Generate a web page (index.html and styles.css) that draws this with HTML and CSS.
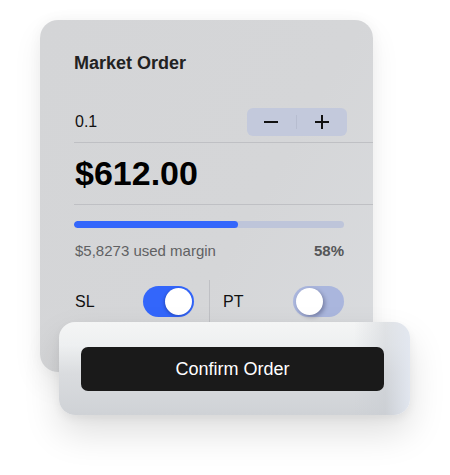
FILE: index.html
```html
<!DOCTYPE html>
<html>
<head>
<meta charset="utf-8">
<link rel="stylesheet" href="styles.css">
</head>
<body>
<div class="stage">
  <div class="card">
    <div class="title">Market Order</div>
    <div class="row qty">
      <span class="qty-val">0.1</span>
      <div class="stepper">
        <span class="step">
          <svg width="14" height="14" viewBox="0 0 14 14"><path d="M0 7H14" stroke="#111" stroke-width="2"/></svg>
        </span>
        <span class="step-sep"></span>
        <span class="step">
          <svg width="14" height="14" viewBox="0 0 14 14"><path d="M0 7H14M7 0V14" stroke="#111" stroke-width="2"/></svg>
        </span>
      </div>
    </div>
    <div class="row price">$612.00</div>
    <div class="margin">
      <div class="bar"><div class="fill" style="width:164px"></div></div>
      <div class="margin-text">
        <span>$5,8273 used margin</span>
        <span class="pct">58%</span>
      </div>
    </div>
    <div class="toggles">
      <div class="tcol left">
        <span class="tlabel">SL</span>
        <span class="switch on"><span class="knob"></span></span>
      </div>
      <div class="tcol right">
        <span class="tlabel">PT</span>
        <span class="switch off"><span class="knob"></span></span>
      </div>
    </div>
  </div>
  <div class="confirm">
    <button class="btn">Confirm Order</button>
  </div>
</div>
</body>
</html>
```

FILE: styles.css
```css
* { box-sizing: border-box; }
html, body { margin: 0; padding: 0; background: #ffffff; }
body { font-family: "Liberation Sans", Arial, sans-serif; width: 450px; height: 475px; overflow: hidden; }

.stage { padding: 20px 0 0 40px; }

.card {
  width: 333px;
  height: 352px;
  border-radius: 18px;
  background: linear-gradient(120deg, #d4d5d7 0%, #d5d6d8 60%, #d9dbde 100%);
  box-shadow: 0 12px 30px rgba(0,0,0,0.07), 0 0 14px rgba(0,0,0,0.04);
  padding: 32px 0 0 34px;
  overflow: hidden;
}

.title {
  font-size: 18px;
  line-height: 22px;
  font-weight: bold;
  color: #222;
  margin: 0 0 34px 0;
}

.row {
  border-bottom: 1px solid #bfc0c4;
  padding-right: 26px;
}

.qty {
  display: flex;
  align-items: center;
  justify-content: space-between;
  height: 35px;
  padding-bottom: 6px;
}
.qty-val { font-size: 16px; color: #111; padding-left: 1px; }

.stepper {
  width: 100px;
  height: 28px;
  border-radius: 6px;
  background: #c3c9dc;
  display: flex;
  align-items: center;
  justify-content: space-between;
  padding: 0 18px 0 17px;
}
.step { display: flex; align-items: center; }
.step svg { display: block; }
.step-sep { width: 1px; height: 14px; background: #b7bdd0; }

.price {
  font-size: 34px;
  line-height: 40px;
  font-weight: bold;
  color: #000;
  padding-top: 10px;
  padding-bottom: 11px;
  padding-left: 1px;
}

.margin { padding: 16px 29px 0 0; }
.bar {
  height: 7px;
  border-radius: 4px;
  background: #bec5da;
  overflow: hidden;
}
.fill { height: 100%; background: #3366fb; border-radius: 4px; }
.margin-text {
  display: flex;
  justify-content: space-between;
  font-size: 15px;
  line-height: 18px;
  color: #606163;
  margin-top: 14px;
  padding-left: 1px;
}
.pct { font-weight: bold; color: #555658; }

.toggles {
  display: flex;
  margin-top: 20px;
  height: 60px;
}
.tcol {
  display: flex;
  align-items: flex-start;
  justify-content: space-between;
  padding-top: 6px;
}
.tcol.left {
  width: 136px;
  padding-right: 15px;
  border-right: 1px solid #bfc0c4;
}
.tcol.right {
  width: 163px;
  padding-left: 12px;
  padding-right: 29px;
}
.tlabel {
  font-size: 16px;
  line-height: 31px;
  color: #111;
  padding-left: 1px;
}
.switch {
  position: relative;
  width: 51px;
  height: 31px;
  border-radius: 16px;
  display: block;
}
.switch.on { background: #3366fb; }
.switch.off { background: #aab6dd; }
.knob {
  position: absolute;
  top: 2px;
  width: 27px;
  height: 27px;
  border-radius: 50%;
  background: #fff;
}
.switch.on .knob { right: 2px; box-shadow: -1px 1px 3px rgba(0,0,40,0.25); }
.switch.off .knob { left: 3px; box-shadow: 2px 2px 4px rgba(0,0,40,0.3); }

.confirm {
  position: relative;
  z-index: 2;
  width: 351px;
  height: 93px;
  margin: -50px 0 0 19px;
  border-radius: 16px;
  background:
    linear-gradient(90deg, rgba(255,255,255,0) 84%, rgba(200,204,210,0.45) 93%, rgba(226,231,240,0.95) 100%),
    linear-gradient(180deg, #f4f5f5 0%, #eef0f1 25%, #dadcdf 55%, #cfd2d6 100%);
  box-shadow: 0 18px 36px rgba(0,0,0,0.13), 0 4px 10px rgba(0,0,0,0.05);
  padding: 25px 26px 0 22px;
}
.btn {
  display: block;
  width: 303px;
  height: 44px;
  border: none;
  border-radius: 7px;
  background: #1a1a1a;
  color: #fff;
  font-family: "Liberation Sans", Arial, sans-serif;
  font-size: 18px;
  padding: 0;
  cursor: pointer;
}
```
